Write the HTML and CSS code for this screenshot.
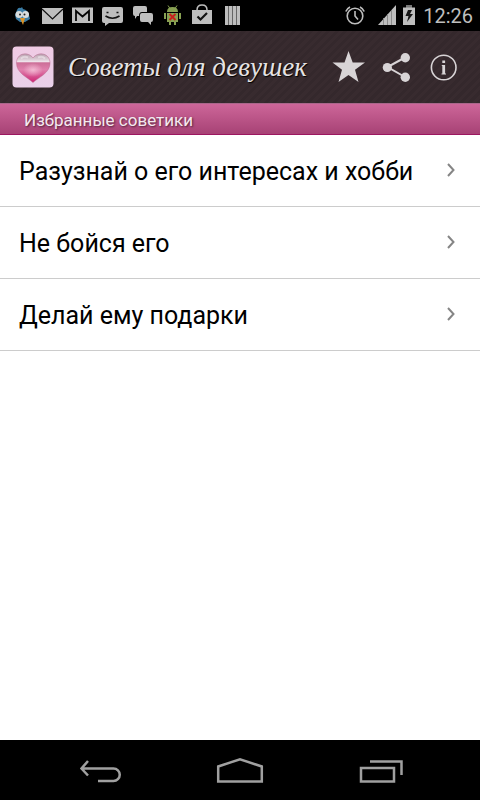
FILE: index.html
```html
<!DOCTYPE html>
<html lang="ru">
<head>
<meta charset="utf-8">
<meta name="viewport" content="width=device-width, initial-scale=1">
<title>Советы для девушек</title>
<link rel="stylesheet" href="styles.css">
</head>
<body>
<div class="status">
  <div class="notifications">
    <svg viewBox="0 0 30 32"><path d="M10 10q1-3 4-2l1-1 1 2q5 1 6 6l1 4-5 3h-5l-4-3-1-4z" fill="#3a7ca5"/><circle cx="12" cy="14.500" r="3.500" fill="#d8dcdc"/><circle cx="18.500" cy="14.500" r="3.500" fill="#d8dcdc"/><circle cx="13" cy="14.500" r="1" fill="#222"/><circle cx="17.500" cy="14.500" r="1" fill="#222"/><path d="M13 18h5l-2 7z" fill="#dc9428"/></svg>
    <svg viewBox="0 0 30 32"><path d="M5 8h21v16H5z" fill="#bebebe"/><path d="M5 9l10.500 10L26 9" fill="none" stroke="#111" stroke-width="1.200"/></svg>
    <svg viewBox="0 0 30 32"><path d="M5 7.500h21v15.500H5z" fill="#bebebe"/><path d="M9 21V11l6.500 5.500L22 11v10" fill="none" stroke="#050505" stroke-width="1.800"/></svg>
    <svg viewBox="0 0 30 32"><path d="M7 7h17q2 0 2 2v12q0 2-2 2H12l-4 3v-3H7q-2 0-2-2V9q0-2 2-2z" fill="#bebebe"/><path d="M9.500 12.500h2m8 0h2M8.500 16q7 4.500 14 0" fill="none" stroke="#111" stroke-width="1.600"/></svg>
    <svg viewBox="0 0 30 32"><path d="M8 6h10q2 0 2 2v4h-5q-3 0-3 4h-2l-2 3v-3q-2 0-2-2V8q0-2 2-2z" fill="#bebebe"/><path d="M15 13h9q2 0 2 2v5q0 2-2 2v3l-3-3h-6q-2 0-2-2v-5q0-2 2-2z" fill="#bebebe"/></svg>
    <svg viewBox="0 0 30 32"><path d="M10 12q0-5 5.500-5t5.500 5zM10 13h11v9H10zM7 13h2v6H7zm15 0h2v6h-2zM12 22h2v3h-2zm5 0h2v3h-2z" fill="#87a052"/><path d="M11 5.500l2 3m7-3l-2 3" stroke="#87a052"/><path d="M12.500 14l6 6m0-6l-6 6" stroke="#c9201c" stroke-width="2"/></svg>
    <svg viewBox="0 0 30 32"><path d="M5 10h20v14H5z" fill="#bebebe"/><path d="M10 10q0-5 5-5t5 5" fill="none" stroke="#bebebe" stroke-width="1.500"/><path d="M10.500 16.500l3 3 6.500-6.500" fill="none" stroke="#111" stroke-width="2.200"/></svg>
    <svg viewBox="0 0 30 32"><path d="M8 6h15v19H8z" fill="#bebebe"/><path d="M11.500 6v19m4-19v19m4-19v19" stroke="#666"/></svg>
  </div>
  <div class="system">
    <svg class="alarm" viewBox="0 0 20 32"><g fill="none" stroke="#bebebe" stroke-width="1.600"><circle cx="10" cy="16" r="7.800"/><path d="M10 11v5l3 3.500M.800 11.500Q2 8.500 5 7m10 0q3 1.500 4.200 4.500"/></g></svg>
    <svg class="signal" viewBox="0 0 18 32"><path d="M0 25L18 5v20z" fill="#bebebe"/><path d="M5.500 18v7m4-11v11m4-15v15" stroke="#8a8a8a"/></svg>
    <svg class="battery" viewBox="0 0 14 32"><path d="M4 5h6v3H4z" fill="#777"/><path d="M1 7.500h12V25H1z" fill="#bebebe"/><path d="M6 10h4l-2 4h3l-6 8 1.500-6H3.500z" fill="#161616"/></svg>
    <time>12:26</time>
  </div>
</div>
<header class="bar">
  <svg class="logo" viewBox="0 0 42 42" aria-hidden="true">
    <defs>
      <linearGradient id="tile" x1="0" y1="0" x2="0" y2="1"><stop offset="0" stop-color="#f0cbe4"/><stop offset="1" stop-color="#e9d0e9"/></linearGradient>
      <linearGradient id="glass" x1="0" y1="0" x2="0" y2="1"><stop offset="0" stop-color="#b99fae"/><stop offset=".18" stop-color="#d9c9d2"/><stop offset=".28" stop-color="#f1e7ee"/><stop offset=".31" stop-color="#cc6f98"/><stop offset=".55" stop-color="#e080ad"/><stop offset="1" stop-color="#cd2474"/></linearGradient>
      <radialGradient id="shine"><stop offset="0" stop-color="#fbd1e3" stop-opacity=".7"/><stop offset="1" stop-color="#fbd1e3" stop-opacity="0"/></radialGradient>
    </defs>
    <rect x=".5" y=".5" width="41" height="41" rx="4" fill="url(#tile)"/>
    <path d="M21 36.500C15 31 4.500 27 4.500 17 4.500 7 16 5 21 12 26 5 38 7 38 17 38 27 27 31 21 36.500z" fill="url(#glass)" stroke="#b9698f" stroke-opacity=".5"/>
    <ellipse cx="21" cy="24" rx="10" ry="7" fill="url(#shine)"/>
    <path d="M9 12.500q3-3 7-1M26 11.500q4-2 7 1" fill="none" stroke="#fff" stroke-width="2" opacity=".4"/>
  </svg>
  <h1>Советы для девушек</h1>
  <button type="button" aria-label="Избранное"><svg viewBox="0 0 48 48"><path d="M24.500 8l4.200 11.500H41l-10 7.200L34.500 39l-10-7-10 7L18 26.700 8.500 19.500h12z" fill="#d8d4d6"/></svg></button>
  <button type="button" aria-label="Поделиться"><svg viewBox="0 0 48 48"><path d="M33 14.500L15.500 24 33 34" fill="none" stroke="#d8d4d6" stroke-width="2"/><g fill="#d8d4d6"><circle cx="33.300" cy="14.800" r="4.700"/><circle cx="15.300" cy="24.500" r="4.600"/><circle cx="33.300" cy="34.300" r="4.700"/></g></svg></button>
  <button type="button" aria-label="Информация"><svg viewBox="0 0 48 48"><circle cx="23.700" cy="24.500" r="12.300" fill="none" stroke="#d8d4d6" stroke-width="1.600"/><path d="M22.300 17.500h2.800V20h-2.800zM21.800 22h3.300v8.500h.9v1h-4.500v-1h.8V23h-.5z" fill="#d8d4d6"/></svg></button>
</header>
<h2>Избранные советики</h2>
<main>
  <ul class="tips">
    <li><a href="#interests">Разузнай о его интересах и хобби<svg viewBox="0 0 10 16"><path d="M2 2l5.500 6L2 14" /></svg></a></li>
    <li><a href="#courage">Не бойся его<svg viewBox="0 0 10 16"><path d="M2 2l5.500 6L2 14" /></svg></a></li>
    <li><a href="#gifts">Делай ему подарки<svg viewBox="0 0 10 16"><path d="M2 2l5.500 6L2 14" /></svg></a></li>
  </ul>
</main>
<nav class="keys">
  <button type="button" aria-label="Назад"><svg viewBox="0 0 48 32"><path d="M12 6L5.500 13.500l6.500 7M5.500 13.500h32a6.200 6.200 0 0 1 0 12.500H22"/></svg></button>
  <button type="button" aria-label="Домой"><svg viewBox="0 0 48 32"><path d="M2.200 26.500v-15L24 4.200l21.800 7.300v15z"/></svg></button>
  <button type="button" aria-label="Недавние"><svg viewBox="0 0 48 32"><path d="M5 13h33v13.500H5zM14 6.500h31.500V20"/></svg></button>
</nav>
</body>
</html>
```
FILE: styles.css
```css
* { box-sizing: border-box; }
body {
  margin: 0;
  min-height: 100vh;
  display: flex;
  flex-direction: column;
  background: #fff;
  font-family: Roboto, sans-serif;
}
svg { display: block; flex: none; }
button { padding: 0; border: 0; background: none; }
.status {
  display: flex;
  justify-content: space-between;
  height: 31px;
  padding: 0 7px;
  background: #000;
  color: #bebebe;
}
.notifications, .system { display: flex; }
.status svg { height: 32px; }
.notifications svg { width: 30px; }
.alarm { width: 20px; margin-right: 13px; }
.signal { width: 18px; margin-right: 6px; }
.battery { width: 14px; margin-right: 7px; }
.status time { font-size: 20px; line-height: 32px; }
.bar {
  display: flex;
  align-items: center;
  height: 72px;
  padding: 0 12px;
  background: repeating-linear-gradient(135deg, #382b2f 0 3px, #34282c 3px 6px);
}
.logo { width: 42px; height: 42px; }
h1 {
  flex: 1;
  margin: 0 0 0 14px;
  font: italic 27px/36px "Liberation Serif", serif;
  color: #e6e3e4;
  text-shadow: 1px 1px 1px #000;
  white-space: nowrap;
}
.bar button, .bar button svg { width: 48px; height: 48px; }
h2 {
  margin: 0;
  height: 32px;
  padding: 0 24px;
  border-top: 1px solid #a9668a;
  border-bottom: 1px solid #9c1660;
  background: linear-gradient(#cd6699, #a74275);
  color: #f4e9ef;
  font-size: 17px;
  font-weight: 400;
  line-height: 32px;
  text-shadow: 1px 1px 2px #502038;
}
main { flex: 1; }
.tips { margin: 0; padding: 0; list-style: none; }
.tips a {
  display: flex;
  justify-content: space-between;
  align-items: flex-start;
  height: 72px;
  padding: 21px 24px 20px 19px;
  border-bottom: 1px solid #ccc;
  color: #000;
  font-size: 25px;
  line-height: 32px;
  text-decoration: none;
}
.tips svg {
  width: 10px;
  height: 16px;
  margin-top: 6px;
  fill: none;
  stroke: #858585;
  stroke-width: 2;
}
.keys {
  display: grid;
  grid-template-columns: repeat(3, 1fr);
  justify-items: center;
  align-items: center;
  height: 60px;
  padding: 2px 30px 0;
  background: #000;
}
.keys svg {
  width: 48px;
  height: 32px;
  fill: none;
  stroke: #a0a0a0;
  stroke-width: 2.5;
}
```
